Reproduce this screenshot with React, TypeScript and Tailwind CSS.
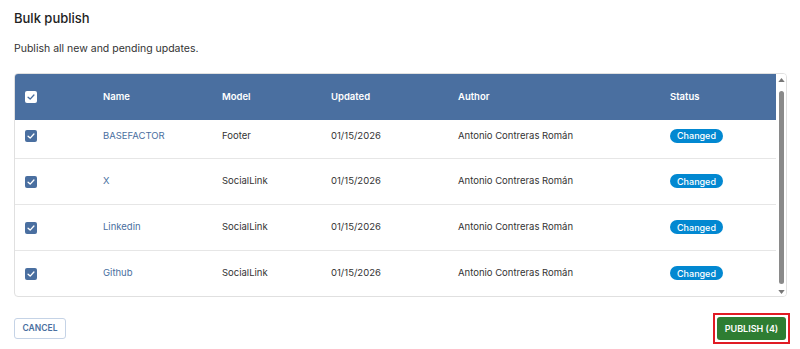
const rows = [
  { name: "BASEFACTOR", model: "Footer" },
  { name: "X", model: "SocialLink" },
  { name: "Linkedin", model: "SocialLink" },
  { name: "Github", model: "SocialLink" },
];

const Check = ({ header }: { header?: boolean }) => (
  <span
    className={
      "flex h-[12px] w-[12px] items-center justify-center rounded-[2px] " +
      (header ? "bg-white" : "bg-[#4a6fa0]")
    }
  >
    <svg viewBox="0 0 12 12" className="h-[10px] w-[10px]">
      <path
        d="M2.5 6.2 L5 8.5 L9.5 3.6"
        fill="none"
        stroke={header ? "#4a6fa0" : "#ffffff"}
        strokeWidth="1.6"
        strokeLinecap="round"
        strokeLinejoin="round"
      />
    </svg>
  </span>
);

const App = () => {
  return (
    <div className="h-[349px] w-[800px] bg-white font-['Inter',sans-serif] text-[#222]">
      <div className="px-[14px] pt-[9px]">
        <h1 className="text-[13px] font-medium leading-[18px] text-[#222]">Bulk publish</h1>
        <p className="mt-[14px] text-[10.5px] leading-[16px] text-[#333]">
          Publish all new and pending updates.
        </p>
      </div>

      <div className="mx-[14px] mt-[16px] flex h-[224px] w-[773px] overflow-hidden rounded-[4px] border border-[#e0e0e0]">
        <div className="flex-1">
          <div className="flex h-[46px] items-center bg-[#4a6fa0] text-[9.5px] font-semibold text-white">
            <div className="w-[88px] pl-[10px]">
              <Check header />
            </div>
            <div className="w-[119px]">Name</div>
            <div className="w-[109px]">Model</div>
            <div className="w-[127px]">Updated</div>
            <div className="w-[212px]">Author</div>
            <div>Status</div>
          </div>
          {rows.map((r, i) => (
            <div
              key={r.name}
              className={
                "flex shrink-0 items-center border-b border-[#e6e6e6] text-[9.5px] " +
                (i === 0 ? "h-[39px] pb-[6px]" : "h-[46px]")
              }
            >
              <div className="w-[88px] pl-[10px]">
                <Check />
              </div>
              <div className="w-[119px] text-[#4a6fa0]">{r.name}</div>
              <div className="w-[109px] text-[#333]">{r.model}</div>
              <div className="w-[127px] text-[#333]">01/15/2026</div>
              <div className="w-[212px] text-[#333]">Antonio Contreras Román</div>
              <div>
                <span className="inline-flex h-[14px] items-center rounded-full bg-[#0288d1] px-[7px] text-[9px] font-medium text-white">
                  Changed
                </span>
              </div>
            </div>
          ))}
        </div>
        <div className="flex w-[10px] flex-col items-center bg-white pt-[4px] pb-[2px]">
          <svg viewBox="0 0 8 5" className="h-[4px] w-[7px]">
            <path d="M0 5 L4 0 L8 5 Z" fill="#777" />
          </svg>
          <div className="mt-[9px] w-[5px] flex-1 rounded-full bg-[#8a8a8a]" />
          <div className="h-[6px]" />
          <svg viewBox="0 0 8 5" className="h-[4px] w-[7px]">
            <path d="M0 0 L8 0 L4 5 Z" fill="#777" />
          </svg>
        </div>
      </div>

      <div className="mt-[16px] flex items-center justify-between px-[14px]">
        <button className="h-[21px] w-[52px] rounded-[3px] border border-[#c5d3e6] text-[8.5px] font-semibold text-[#4a6fa0]">
          CANCEL
        </button>
        <div className="mr-[-4px] border-2 border-[#e01b24] p-[2px]">
          <button className="flex h-[23px] w-[69px] items-center justify-center rounded-[3px] bg-[#2e7d32] text-[9px] font-semibold text-white">
            PUBLISH (4)
          </button>
        </div>
      </div>
    </div>
  );
};

export default App;
